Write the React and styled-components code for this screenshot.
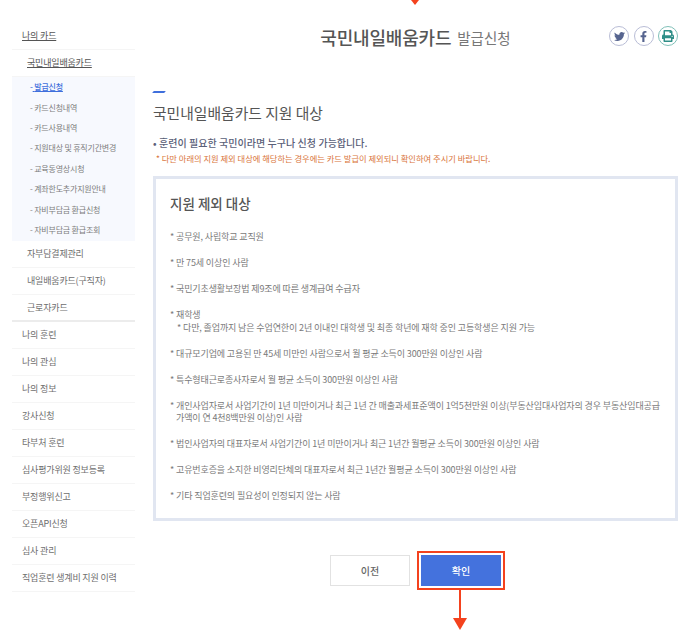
import React from 'react';
import styled, { createGlobalStyle } from 'styled-components';
import { FaTwitter, FaFacebookF, FaPrint } from 'react-icons/fa';

const GlobalStyle = createGlobalStyle`
  html, body {
    margin: 0;
    padding: 0;
    background: #fff;
    font-family: "Noto Sans CJK KR", "Noto Sans", sans-serif;
    color: #555;
  }
  * { box-sizing: border-box; }
`;

const Page = styled.div`
  position: relative;
  width: 687px;
  height: 640px;
  overflow: hidden;
  display: grid;
  grid-template-columns: 123px 1fr;
  column-gap: 18px;
  padding: 23px 9px 0 12px;
`;

const Side = styled.nav`
  display: flex;
  flex-direction: column;
  margin-top: -0.5px;
`;

const TopItem = styled.div`
  height: 27px;
  display: flex;
  align-items: center;
  padding-left: 10px;
  font-size: 9px;
  letter-spacing: -0.18px;
  white-space: nowrap;
  color: ${p => (p.$active ? '#555' : '#6e6e6e')};
  text-decoration: ${p => (p.$active ? 'underline' : 'none')};
  border-bottom: ${p => (p.$thick ? '2px solid #ececec' : '1px solid #f5f5f5')};
`;

const CardItem = styled(TopItem)`
  padding-left: 15px;
`;

const SubPanel = styled.ul`
  list-style: none;
  margin: 0;
  padding: 0;
  height: 164px;
  background: #f7f9fe;
  display: flex;
  flex-direction: column;
`;

const SubItem = styled.li`
  height: 20.4px;
  display: flex;
  align-items: center;
  padding-left: 18px;
  font-size: 8px;
  letter-spacing: -0.2px;
  white-space: nowrap;
  color: ${p => (p.$active ? '#3f6fdc' : '#7d7d7d')};
  font-weight: ${p => (p.$active ? 500 : 400)};
  span { text-decoration: ${p => (p.$active ? 'underline' : 'none')}; }
`;

const Main = styled.main`
  display: flex;
  flex-direction: column;
`;

const Header = styled.header`
  position: relative;
  height: 28px;
  display: flex;
  align-items: center;
  justify-content: center;
  gap: 6px;
`;

const PageTitle = styled.h1`
  margin: 0;
  font-size: 18px;
  font-weight: 500;
  color: #555;
  letter-spacing: -0.2px;
`;

const PageSub = styled.span`
  font-size: 14.5px;
  color: #777;
  padding-top: 1px;
`;

const Shares = styled.div`
  position: absolute;
  right: 0;
  top: 3px;
  display: flex;
  gap: 4.5px;
`;

const Share = styled.span`
  width: 20px;
  height: 20px;
  border-radius: 50%;
  border: 1.5px solid ${p => p.$ring};
  color: ${p => p.$color};
  display: flex;
  align-items: center;
  justify-content: center;
  font-size: ${p => p.$size}px;
`;

const Accent = styled.div`
  width: 12px;
  height: 2px;
  margin-top: 40px;
  background: #3f6fdc;
  transform: skewX(-40deg);
`;

const Heading = styled.h2`
  margin: 8px 0 0;
  font-size: 14.8px;
  line-height: 24px;
  font-weight: 400;
  color: #555;
`;

const Lead = styled.p`
  margin: 10px 0 0;
  font-size: 10px;
  line-height: 15px;
  font-weight: 500;
  color: #5a6078;
  word-spacing: 0.2px;
`;

const Warn = styled.p`
  margin: 1px 0 0 3px;
  font-size: 8.27px;
  line-height: 14px;
  color: #d9743a;
`;

const Box = styled.section`
  margin-top: 11px;
  height: 345px;
  border: 3px solid #e1e6f1;
  padding: 14px 13px 0 14px;
`;

const BoxTitle = styled.h3`
  margin: 0 0 18px;
  font-size: 13.5px;
  line-height: 20px;
  font-weight: 500;
  color: #555;
`;

const List = styled.ul`
  list-style: none;
  margin: 0;
  padding: 0;
  display: flex;
  flex-direction: column;
`;

const Item = styled.li`
  margin-bottom: 13.5px;
  padding-left: 6px;
  position: relative;
  font-size: 9px;
  line-height: 12.5px;
  color: #7a7a7a;
  letter-spacing: -0.12px;
  &::before {
    content: '*';
    position: absolute;
    left: 0;
    top: 0;
  }
`;

const Note = styled.div`
  padding-left: 1px;
`;

const Buttons = styled.div`
  margin-top: 30px;
  margin-left: 4px;
  display: flex;
  justify-content: center;
  gap: 7px;
  align-items: center;
`;

const Btn = styled.button`
  width: 80px;
  height: 31px;
  padding: 0;
  font-family: inherit;
  font-size: 10px;
  font-weight: 500;
  border-radius: 0;
  background: ${p => (p.$primary ? '#4472dd' : '#fff')};
  color: ${p => (p.$primary ? '#fff' : '#666')};
  border: ${p => (p.$primary ? 'none' : '1px solid #e2e2e2')};
`;

const Highlight = styled.div`
  border: 2px solid #f4421e;
  padding: 2px;
  background: #fff;
  display: flex;
`;

const ArrowTop = styled.div`
  position: absolute;
  left: 411px;
  top: 0;
  width: 0;
  height: 0;
  border-left: 4px solid transparent;
  border-right: 4px solid transparent;
  border-top: 5px solid #f4421e;
`;

const ArrowStem = styled.div`
  position: absolute;
  left: 459px;
  top: 590px;
  width: 2px;
  height: 29px;
  background: #f4421e;
`;

const ArrowHead = styled.div`
  position: absolute;
  left: 453px;
  top: 618px;
  width: 0;
  height: 0;
  border-left: 7px solid transparent;
  border-right: 7px solid transparent;
  border-top: 12px solid #f4421e;
`;

const subMenu = [
  '발급신청',
  '카드신청내역',
  '카드사용내역',
  '지원대상 및 휴직기간변경',
  '교육동영상시청',
  '계좌한도추가지원안내',
  '자비부담금 환급신청',
  '자비부담금 환급조회',
];

const restMenu = [
  '나의 훈련', '나의 관심', '나의 정보', '강사신청', '타부처 훈련',
  '심사평가위원 정보등록', '부정행위신고', '오픈API신청', '심사 관리', '직업훈련 생계비 지원 이력',
];

const exclusions = [
  { text: '공무원, 사립학교 교직원' },
  { text: '만 75세 이상인 사람' },
  { text: '국민기초생활보장법 제9조에 따른 생계급여 수급자' },
  { text: '재학생', note: '* 다만, 졸업까지 남은 수업연한이 2년 이내인 대학생 및 최종 학년에 재학 중인 고등학생은 지원 가능' },
  { text: '대규모기업에 고용된 만 45세 미만인 사람으로서 월 평균 소득이 300만원 이상인 사람' },
  { text: '특수형태근로종사자로서 월 평균 소득이 300만원 이상인 사람' },
  { text: '개인사업자로서 사업기간이 1년 미만이거나 최근 1년 간 매출과세표준액이 1억5천만원 이상(부동산임대사업자의 경우 부동산임대공급가액이 연 4천8백만원 이상)인 사람' },
  { text: '법인사업자의 대표자로서 사업기간이 1년 미만이거나 최근 1년간 월평균 소득이 300만원 이상인 사람' },
  { text: '고유번호증을 소지한 비영리단체의 대표자로서 최근 1년간 월평균 소득이 300만원 이상인 사람' },
  { text: '기타 직업훈련의 필요성이 인정되지 않는 사람' },
];

export default function App() {
  return (
    <Page>
      <GlobalStyle />
      <ArrowTop />
      <Side>
        <TopItem $active>나의 카드</TopItem>
        <CardItem $active>국민내일배움카드</CardItem>
        <SubPanel>
          {subMenu.map((item, i) => (
            <SubItem key={item} $active={i === 0}>- <span>&nbsp;{item}</span></SubItem>
          ))}
        </SubPanel>
        <CardItem>자부담결제관리</CardItem>
        <CardItem>내일배움카드(구직자)</CardItem>
        <CardItem $thick>근로자카드</CardItem>
        {restMenu.map(item => <TopItem key={item}>{item}</TopItem>)}
      </Side>
      <Main>
        <Header>
          <PageTitle>국민내일배움카드</PageTitle>
          <PageSub>발급신청</PageSub>
          <Shares>
            <Share $ring="#b9bdd6" $color="#56648f" $size={11}><FaTwitter /></Share>
            <Share $ring="#b9bdd6" $color="#56648f" $size={11}><FaFacebookF /></Share>
            <Share $ring="#7fc0b8" $color="#2f8f88" $size={12}><FaPrint /></Share>
          </Shares>
        </Header>
        <Accent />
        <Heading>국민내일배움카드 지원 대상</Heading>
        <Lead>• 훈련이 필요한 국민이라면 누구나 신청 가능합니다.</Lead>
        <Warn>* 다만 아래의 지원 제외 대상에 해당하는 경우에는 카드 발급이 제외되니 확인하여 주시기 바랍니다.</Warn>
        <Box>
          <BoxTitle>지원 제외 대상</BoxTitle>
          <List>
            {exclusions.map(e => (
              <Item key={e.text}>
                {e.text}
                {e.note && <Note>{e.note}</Note>}
              </Item>
            ))}
          </List>
        </Box>
        <Buttons>
          <Btn>이전</Btn>
          <Highlight><Btn $primary>확인</Btn></Highlight>
        </Buttons>
      </Main>
      <ArrowStem />
      <ArrowHead />
    </Page>
  );
}
